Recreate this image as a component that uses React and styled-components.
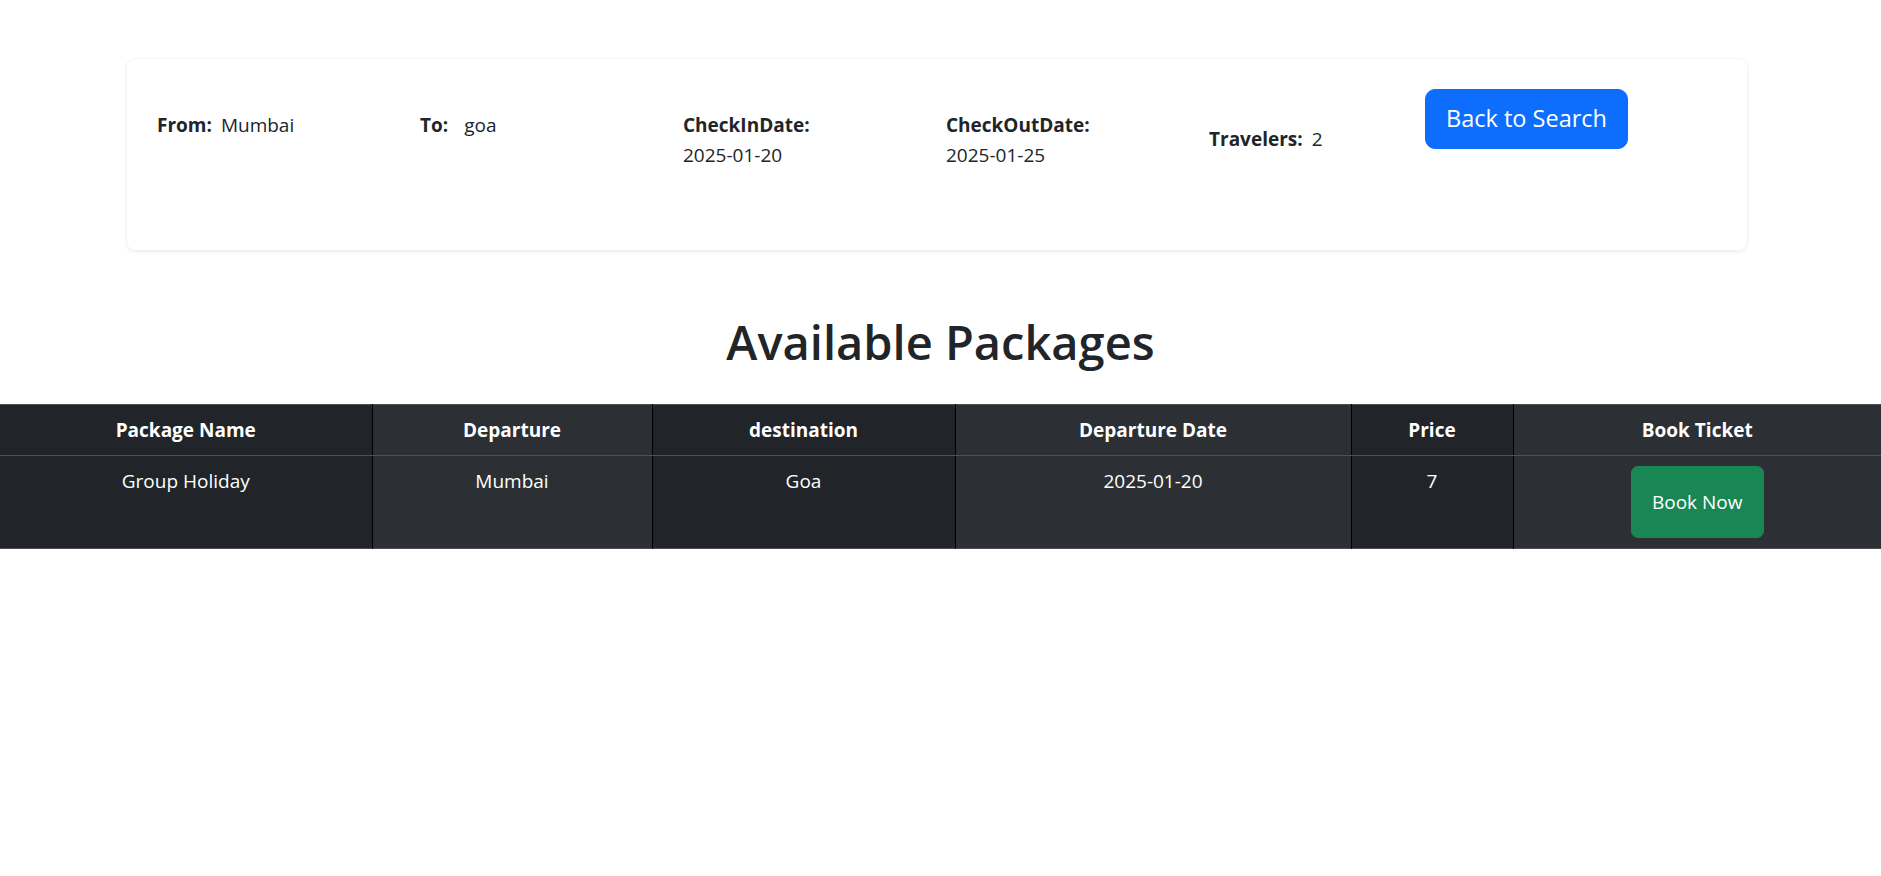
import React from 'react';
import styled, { createGlobalStyle } from 'styled-components';

const GlobalStyle = createGlobalStyle`
  body {
    margin: 0;
    background: #ffffff;
    color: #212529;
    font-family: "Segoe UI", "Open Sans", "Noto Sans", sans-serif;
    font-size: 19px;
    line-height: 30px;
  }
`;

const Page = styled.div`
  padding-top: 59px;
`;

const SearchCard = styled.div`
  box-sizing: border-box;
  width: 1620px;
  height: 191px;
  margin: 0 0 0 127px;
  padding: 30px;
  background: #ffffff;
  border-radius: 8px;
  box-shadow: 0 0 3px rgba(0, 0, 0, 0.06), 0 2px 5px rgba(0, 0, 0, 0.06);
`;

const SearchRow = styled.div`
  display: grid;
  grid-template-columns: repeat(4, 263px) 216px auto;
  align-items: start;
`;

const Field = styled.div`
  margin-top: ${({ $offset }) => $offset}px;
`;

const Label = styled.strong`
  font-weight: 700;
`;

const Value = styled.span`
  margin-left: ${({ $gap }) => $gap}px;
`;

const StackedValue = styled.div``;

const BackButton = styled.button`
  padding: 10px 20px;
  background: #0d6efd;
  color: #ffffff;
  border: 1px solid #0d6efd;
  border-radius: 10px;
  font-family: inherit;
  font-size: 23.5px;
  line-height: 37.5px;
  cursor: pointer;
`;

const Heading = styled.h1`
  margin: 62px 0 32px;
  text-align: center;
  font-size: 47px;
  font-weight: 600;
  line-height: 60px;
  color: #212529;
`;

const Table = styled.table`
  width: 100%;
  table-layout: fixed;
  border-collapse: collapse;
  color: #ffffff;
  border-top: 1px solid #4d5154;
  border-bottom: 1px solid #4d5154;
`;

const HeadCell = styled.th`
  box-sizing: border-box;
  width: ${({ $width }) => $width}px;
  padding: 10px;
  font-weight: 700;
  text-align: center;
  background: ${({ $striped }) => ($striped ? '#2c3034' : '#212529')};
  border-left: 1px solid #000000;
  border-bottom: 1px solid #4d5154;

  &:first-child {
    border-left: none;
  }
`;

const Cell = styled.td`
  box-sizing: border-box;
  padding: 10px;
  text-align: center;
  vertical-align: top;
  background: ${({ $striped }) => ($striped ? '#2c3034' : '#212529')};
  border-left: 1px solid #000000;

  &:first-child {
    border-left: none;
  }
`;

const BookButton = styled.button`
  padding: 20px;
  background: #198754;
  color: #ffffff;
  border: 1px solid #198754;
  border-radius: 7px;
  font-family: inherit;
  font-size: 19px;
  line-height: 30px;
  cursor: pointer;
`;

const columns = [
  { title: 'Package Name', width: 372 },
  { title: 'Departure', width: 280 },
  { title: 'destination', width: 303 },
  { title: 'Departure Date', width: 396 },
  { title: 'Price', width: 162 },
  { title: 'Book Ticket', width: 368 },
];

const packages = [
  { name: 'Group Holiday', from: 'Mumbai', to: 'Goa', date: '2025-01-20', price: 7 },
];

export default function App() {
  return (
    <>
      <GlobalStyle />
      <Page>
        <SearchCard>
          <SearchRow>
            <Field $offset={21}>
              <Label>From:</Label>
              <Value $gap={9}>Mumbai</Value>
            </Field>
            <Field $offset={21}>
              <Label>To:</Label>
              <Value $gap={16}>goa</Value>
            </Field>
            <Field $offset={21}>
              <Label>CheckInDate:</Label>
              <StackedValue>2025-01-20</StackedValue>
            </Field>
            <Field $offset={21}>
              <Label>CheckOutDate:</Label>
              <StackedValue>2025-01-25</StackedValue>
            </Field>
            <Field $offset={35}>
              <Label>Travelers:</Label>
              <Value $gap={9}>2</Value>
            </Field>
            <Field $offset={0}>
              <BackButton>Back to Search</BackButton>
            </Field>
          </SearchRow>
        </SearchCard>

        <Heading>Available Packages</Heading>

        <Table>
          <thead>
            <tr>
              {columns.map((col, i) => (
                <HeadCell key={col.title} $width={col.width} $striped={i % 2 === 1}>
                  {col.title}
                </HeadCell>
              ))}
            </tr>
          </thead>
          <tbody>
            {packages.map((p) => (
              <tr key={p.name}>
                <Cell>{p.name}</Cell>
                <Cell $striped>{p.from}</Cell>
                <Cell>{p.to}</Cell>
                <Cell $striped>{p.date}</Cell>
                <Cell>{p.price}</Cell>
                <Cell $striped>
                  <BookButton>Book Now</BookButton>
                </Cell>
              </tr>
            ))}
          </tbody>
        </Table>
      </Page>
    </>
  );
}
